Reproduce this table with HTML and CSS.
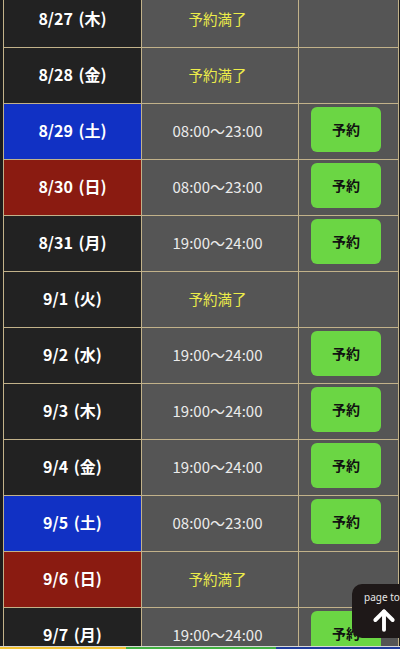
FILE: index.html
```html
<!DOCTYPE html>
<html lang="ja">
<head>
<meta charset="utf-8">
<link rel="stylesheet" href="styles.css">
</head>
<body>
<div class="schedule">
  <div class="date">8/27 (木)</div><div class="time full">予約満了</div><div class="act"></div>
  <div class="date">8/28 (金)</div><div class="time full">予約満了</div><div class="act"></div>
  <div class="date sat">8/29 (土)</div><div class="time">08:00〜23:00</div><div class="act"><a class="btn">予約</a></div>
  <div class="date sun">8/30 (日)</div><div class="time">08:00〜23:00</div><div class="act"><a class="btn">予約</a></div>
  <div class="date">8/31 (月)</div><div class="time">19:00〜24:00</div><div class="act"><a class="btn">予約</a></div>
  <div class="date">9/1 (火)</div><div class="time full">予約満了</div><div class="act"></div>
  <div class="date">9/2 (水)</div><div class="time">19:00〜24:00</div><div class="act"><a class="btn">予約</a></div>
  <div class="date">9/3 (木)</div><div class="time">19:00〜24:00</div><div class="act"><a class="btn">予約</a></div>
  <div class="date">9/4 (金)</div><div class="time">19:00〜24:00</div><div class="act"><a class="btn">予約</a></div>
  <div class="date sat">9/5 (土)</div><div class="time">08:00〜23:00</div><div class="act"><a class="btn">予約</a></div>
  <div class="date sun">9/6 (日)</div><div class="time full">予約満了</div><div class="act"></div>
  <div class="date">9/7 (月)</div><div class="time">19:00〜24:00</div><div class="act"><a class="btn">予約</a></div>
</div>
<a class="pagetop">
  <span class="pt-label">page top</span>
  <svg class="pt-arrow" width="26" height="26" viewBox="0 0 24 24" fill="none" stroke="#ffffff" stroke-width="3.6" stroke-linecap="round" stroke-linejoin="round"><path d="M12 21V4"/><path d="M4 12l8-8 8 8"/></svg>
</a>
<div class="bottombar"><span class="b1"></span><span class="b2"></span><span class="b3"></span></div>
</body>
</html>
```
FILE: styles.css
```css
html, body {
  margin: 0;
  padding: 0;
  background: #1c1c1c;
}
body {
  font-family: "Noto Sans CJK JP", "Noto Sans", sans-serif;
  padding-left: 3px;
  padding-right: 1px;
  overflow: hidden;
  height: 649px;
}
.schedule {
  margin-top: -9px;
  display: grid;
  grid-template-columns: 137px 156px 99px;
  grid-auto-rows: 55px;
  gap: 1px;
  padding: 1px;
  background: #c2b28a;
  width: 394px;
}
.date {
  background: #222222;
  color: #ffffff;
  font-weight: 700;
  font-size: 16px;
  word-spacing: 2px;
  display: flex;
  align-items: center;
  justify-content: center;
  padding-bottom: 3px;
}
.date.sat { background: #1131c4; }
.date.sun { background: #8a1b11; }
.time {
  background: #555555;
  color: #ebebeb;
  font-size: 15px;
  display: flex;
  align-items: center;
  justify-content: center;
  padding-right: 5px;
  padding-bottom: 3px;
}
.time.full {
  color: #ecec4a;
  font-size: 14.5px;
}
.act {
  background: #555555;
  display: flex;
  align-items: center;
  justify-content: center;
  padding-right: 5px;
}
.btn {
  width: 70px;
  height: 45px;
  margin-bottom: 4px;
  border-radius: 6px;
  background: #6bd644;
  color: #111111;
  font-weight: 700;
  font-size: 14px;
  display: flex;
  align-items: center;
  justify-content: center;
  padding-bottom: 2px;
  box-sizing: border-box;
}
.pagetop {
  position: fixed;
  left: 352px;
  top: 584px;
  width: 62px;
  height: 54px;
  border-radius: 10px;
  background: #1e1818;
  display: flex;
  flex-direction: column;
  align-items: flex-start;
  padding-left: 12px;
  box-sizing: border-box;
}
.pt-label {
  color: #e8e8e8;
  font-family: "Noto Sans", sans-serif;
  font-size: 10px;
  line-height: 1;
  margin-top: 8px;
  white-space: nowrap;
}
.pt-arrow {
  margin-top: 5px;
  margin-left: 7px;
}
.bottombar {
  position: fixed;
  left: 0;
  right: 0;
  top: 646px;
  height: 3px;
  display: flex;
  border-top: 1px solid #d8d8d8;
}
.b1 { width: 126px; background: #f2c232; }
.b2 { width: 150px; background: #42b142; }
.b3 { flex: 1; background: #1f3c9c; }
```
